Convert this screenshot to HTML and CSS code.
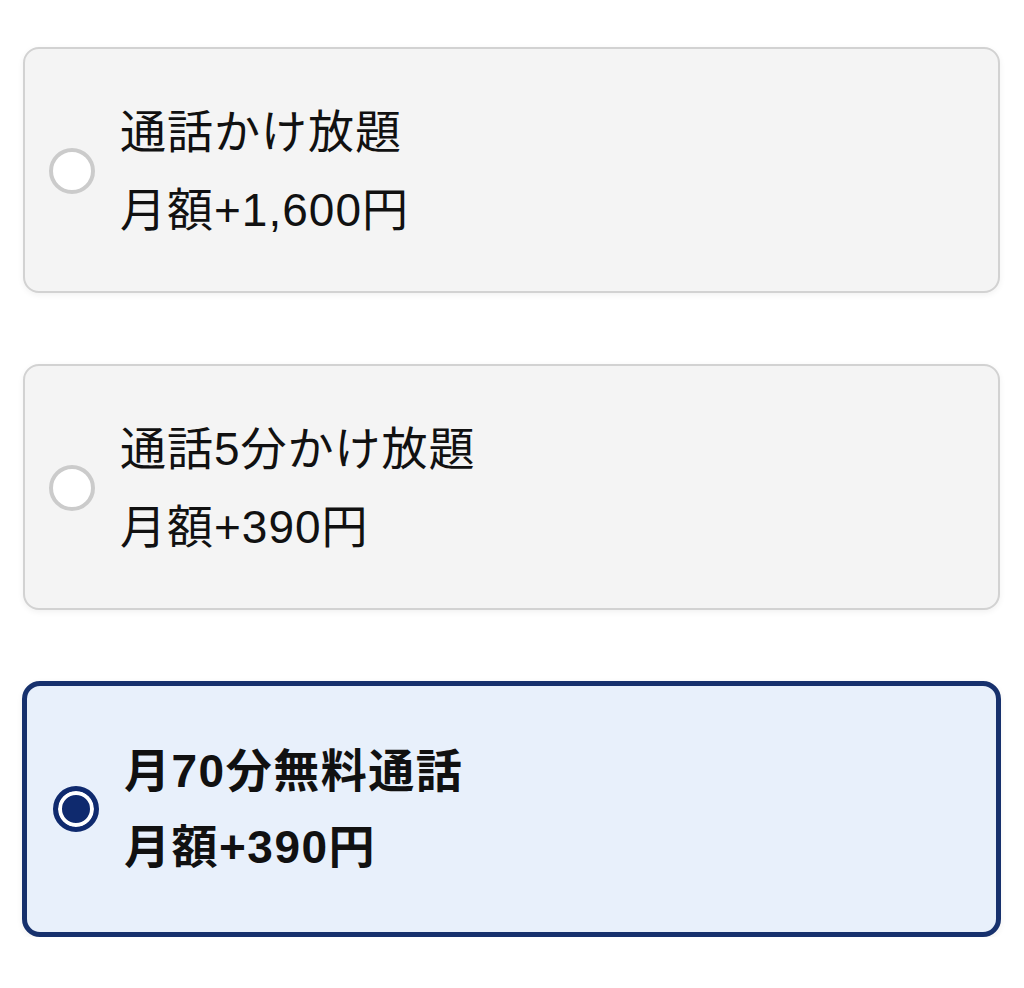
FILE: index.html
```html
<!DOCTYPE html>
<html lang="ja">
<head>
<meta charset="utf-8">
<title>通話オプション</title>
<link rel="stylesheet" href="styles.css">
</head>
<body>
<div class="options">
  <label class="option">
    <span class="radio"></span>
    <span class="text">
      <span class="line">通話かけ放題</span>
      <span class="line">月額+1,600円</span>
    </span>
  </label>
  <label class="option">
    <span class="radio"></span>
    <span class="text">
      <span class="line">通話5分かけ放題</span>
      <span class="line">月額+390円</span>
    </span>
  </label>
  <label class="option selected">
    <span class="radio"></span>
    <span class="text">
      <span class="line">月70分無料通話</span>
      <span class="line">月額+390円</span>
    </span>
  </label>
</div>
</body>
</html>
```
FILE: styles.css
```css
html, body {
  margin: 0;
  padding: 0;
  background: #ffffff;
}
body {
  font-family: "Liberation Sans", "Noto Sans CJK JP", sans-serif;
  color: #111111;
}
.options {
  display: flex;
  flex-direction: column;
  gap: 71px;
  padding: 47px 24px 0 23px;
}
.option {
  box-sizing: border-box;
  display: flex;
  align-items: center;
  gap: 25px;
  height: 246px;
  padding: 2px 24px 0;
  background: #f4f4f4;
  border: 2px solid #d2d2d2;
  border-radius: 16px;
  box-shadow: 0 2px 6px rgba(0, 0, 0, 0.06);
}
.radio {
  box-sizing: border-box;
  flex: none;
  width: 46px;
  height: 46px;
  border-radius: 50%;
  border: 4px solid #cbcbcb;
  background: #ffffff;
}
.text {
  display: flex;
  flex-direction: column;
  font-size: 46px;
  line-height: 78px;
  letter-spacing: 1px;
}
.line {
  display: block;
}
.option.selected {
  height: 256px;
  margin-left: -1px;
  margin-right: -1px;
  padding: 0 24px 0 26px;
  background: #e8f0fb;
  border: 5px solid #17316d;
  border-radius: 18px;
}
.option.selected .radio {
  border: 5px solid #0f2a6e;
  background: #0f2a6e;
  box-shadow: inset 0 0 0 4px #ffffff;
}
.option.selected .text {
  font-weight: 700;
  line-height: 76px;
  letter-spacing: 1.5px;
}
```
